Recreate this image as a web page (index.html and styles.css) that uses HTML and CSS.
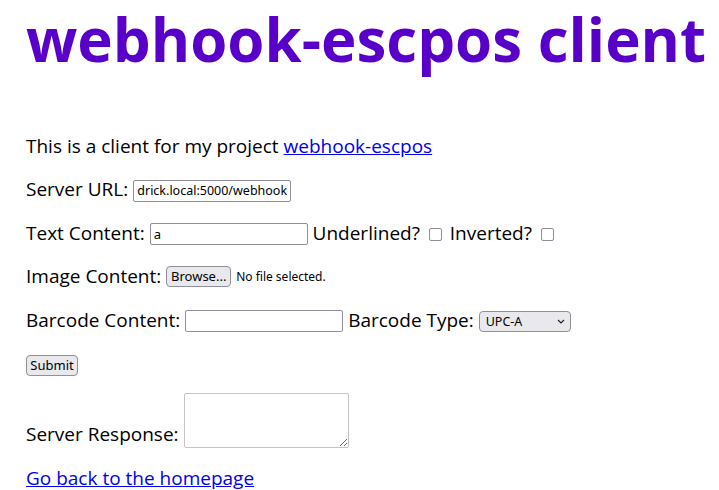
FILE: index.html
```html
<!doctype html>
<html lang="en-US">
<head>
<title>webhook-escpos client</title>
<link rel="stylesheet" href="styles.css">
</head>
<body>
<h1 class="title">webhook-escpos client</h1>
<div class="content">
<p>This is a client for my project <a href="#">webhook-escpos</a></p>
<form class="printform" onsubmit="return false">
	<p>Server URL: <input type="text" class="field url" id="serverurl" value="http://cedrick.local:5000/webhook"></p>
	<p>Text Content: <input type="text" class="field" value="a"> Underlined? <input type="checkbox" class="check"> Inverted? <input type="checkbox" class="check"></p>
	<p>Image Content: <label class="file"><input type="file" class="hidden"><span class="btn">Browse...</span></label> <span class="filename">No file selected.</span></p>
	<p>Barcode Content: <input type="text" class="field"> Barcode Type: <span class="selectwrap"><select class="select">
		<option>UPC-A</option>
		<option>UPC-E</option>
		<option>EAN13</option>
		<option>EAN8</option>
		<option>CODE39</option>
	</select><svg class="chevron" width="8" height="5" viewBox="0 0 8 5"><path d="M1 1l3 3 3-3" fill="none" stroke="#222" stroke-width="1.2"/></svg></span></p>
	<p class="submitrow"><button type="submit" class="btn">Submit</button></p>
	<p class="responserow">Server Response: <textarea class="response" readonly></textarea></p>
</form>
<p class="back"><a href="#">Go back to the homepage</a></p>
</div>
<script>
var url = document.getElementById("serverurl");
url.scrollLeft = url.scrollWidth;
</script>
</body>
</html>
```

FILE: styles.css
```css
html, body {
	margin: 0;
	background: #fff;
}
body {
	padding: 0 26px;
	font-family: "Open Sans", "Noto Sans", sans-serif;
	color: #000;
}
.title {
	margin: 0 -26px 0 0;
	font-size: 60px;
	line-height: 78px;
	font-weight: 700;
	color: #5800c9;
	white-space: nowrap;
}
.content {
	padding-top: 39px;
}
p {
	margin: 16px 0;
	font-size: 19px;
	line-height: 27.4px;
}
a {
	color: #0000ee;
}
.field, .select, .btn, .filename, .response {
	font-family: "Noto Sans", "Open Sans", sans-serif;
	font-size: 13px;
}
.field {
	box-sizing: border-box;
	width: 158px;
	height: 22px;
	padding: 1px 3px;
	border: 1px solid #8f8f9d;
	border-radius: 2px;
	vertical-align: 1px;
}
.url {
	font-size: 12.5px;
}
.check {
	appearance: none;
	width: 13px;
	height: 13px;
	margin: 0 3px 0 4px;
	border: 1px solid #8f8f9d;
	border-radius: 2px;
	background: #fff;
	vertical-align: -1px;
}
.hidden {
	display: none;
}
.btn {
	box-sizing: border-box;
	height: 21px;
	padding: 0 6px;
	border: 1px solid #8f8f9d;
	border-radius: 4px;
	background: #e9e9ed;
	color: #000;
	display: inline-flex;
	align-items: center;
	vertical-align: 2px;
}
.file .btn {
	width: 65px;
	justify-content: center;
}
.filename {
	font-size: 12px;
	vertical-align: 2px;
}
.selectwrap {
	position: relative;
	display: inline-block;
	vertical-align: 1px;
}
.select {
	appearance: none;
	box-sizing: border-box;
	width: 92px;
	height: 21px;
	padding: 0 6px;
	border: 1px solid #8f8f9d;
	border-radius: 4px;
	background: #e9e9ed;
	color: #000;
	font-size: 12.5px;
	display: block;
}
.chevron {
	position: absolute;
	right: 6px;
	top: 8px;
}
.submitrow .btn {
	width: 52px;
	justify-content: center;
	vertical-align: 0;
}
.response {
	box-sizing: border-box;
	width: 165px;
	height: 55px;
	border: 1px solid #c3c3c8;
	border-radius: 2px;
	vertical-align: -7px;
	resize: both;
}
```
